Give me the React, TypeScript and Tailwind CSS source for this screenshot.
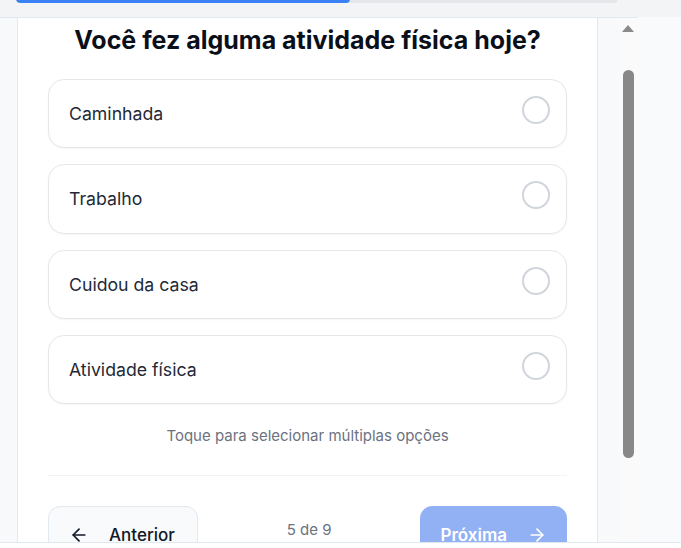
import { ArrowLeft, ArrowRight } from 'lucide-react';

const options = ['Caminhada', 'Trabalho', 'Cuidou da casa', 'Atividade física'];

export default function App() {
  const step = 5;
  const total = 9;

  return (
    <div className="w-[681px] h-[548px] overflow-hidden bg-[#f9fafb] flex flex-col font-['Inter',sans-serif]">
      {/* Progress */}
      <div className="h-[17px] bg-[#f3f4f6] pl-[16px] shrink-0">
        <div className="w-[602px] h-[8px] -mt-[5px] rounded-full bg-[#e5e7eb] overflow-hidden">
          <div className="h-full rounded-full bg-[#3b82f6]" style={{ width: `${(step / total) * 100}%` }} />
        </div>
      </div>

      {/* Main */}
      <div className="flex h-[525px] shrink-0">
        <div className="w-[638px] flex border-t border-[#e2e8f0] bg-[#f8f9fb] pl-[17px] overflow-hidden">
          <div className="w-[581px] shrink-0 bg-white border-x border-[#e5e7eb] px-[30px] pt-[6px]">
            <h1 className="text-center font-bold text-[25px] leading-8 text-[#0b0f19]">
              Você fez alguma atividade física hoje?
            </h1>

            <div className="mt-[23px] flex flex-col gap-4">
              {options.map((opt) => (
                <button
                  key={opt}
                  className="relative h-[69.33px] w-full flex items-center px-5 rounded-2xl border border-[#e5e7eb] bg-white shadow-[0_1px_2px_rgba(0,0,0,0.04)] text-left"
                >
                  <span className="mt-px text-[17.7px] text-[#1f2937]">{opt}</span>
                  <span className="absolute top-4 right-4 w-7 h-7 rounded-full border-2 border-[#d1d5db]" />
                </button>
              ))}
            </div>

            <p className="mt-[22px] text-center text-[15px] leading-5 text-[#6b7280]">
              Toque para selecionar múltiplas opções
            </p>

            <div className="mt-[29px] h-px bg-[#f1f3f6]" />

            <div className="mt-[30px] flex items-start justify-between">
              <button className="flex items-center gap-5 pl-5 pr-[22px] py-[14px] rounded-xl border border-[#e2e8f0] bg-[#f8fafc] text-[17px] leading-7 font-medium text-[#111827]">
                <ArrowLeft size={20} strokeWidth={2} />
                Anterior
              </button>
              <span className="mt-[14px] text-[15px] leading-5 text-[#6b7280]">
                {step} de {total}
              </span>
              <button className="flex items-center gap-5 pl-[19px] pr-[19px] py-[14px] rounded-xl border border-[#92b1f5] bg-[#92b1f5] text-[17px] leading-7 font-semibold text-white">
                Próxima
                <ArrowRight size={20} strokeWidth={2} />
              </button>
            </div>
          </div>

          {/* Scrollbar */}
          <div className="w-[40px] shrink-0 flex justify-end">
            <div className="w-[20px] bg-[#fafafa] flex flex-col items-center">
              <div className="mt-[7px] w-0 h-0 border-x-[6px] border-x-transparent border-b-[7px] border-b-[#8a8a8a]" />
              <div className="mt-[38px] w-[11px] h-[388px] rounded-full bg-[#888888]" />
            </div>
          </div>
        </div>
        <div className="flex-1 bg-[#f9fafb]" />
      </div>

      {/* Bottom edge */}
      <div className="h-[6px] shrink-0 border-t border-[#e2e8f0] bg-white" />
    </div>
  );
}
